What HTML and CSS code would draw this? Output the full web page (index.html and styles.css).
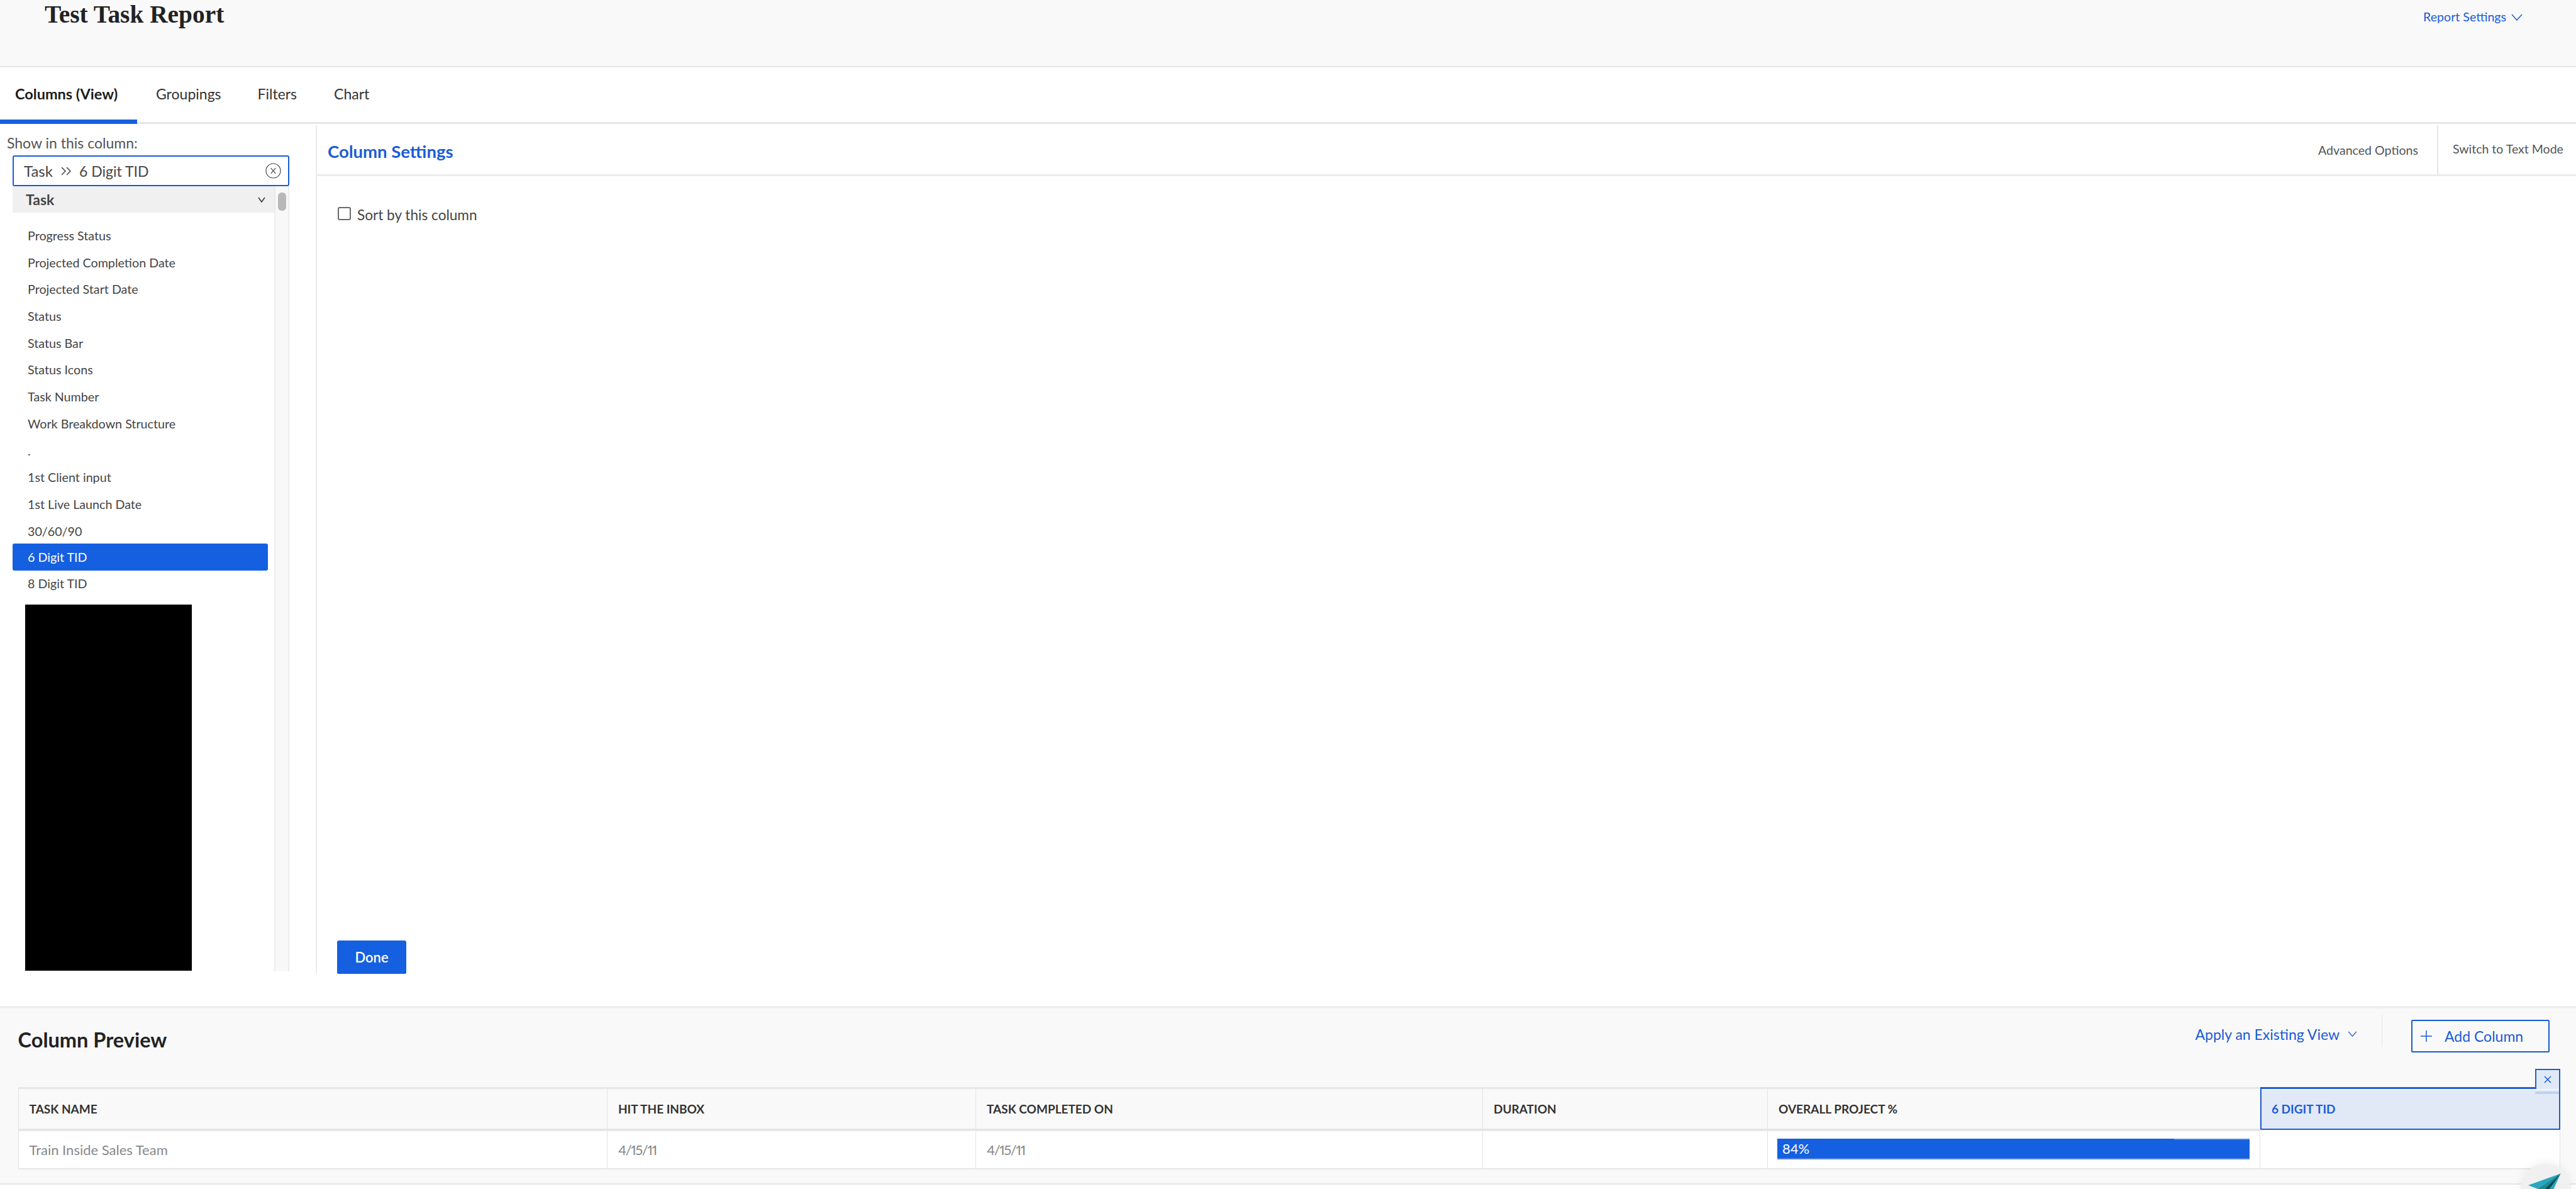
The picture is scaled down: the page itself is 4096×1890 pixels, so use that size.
FILE: index.html
```html
<!DOCTYPE html>
<html lang="en">
<head>
<meta charset="utf-8">
<title>Test Task Report</title>
<link rel="stylesheet" href="styles.css">
</head>
<body>
<div class="page">
  <header class="top">
    <h1 class="title">Test Task Report</h1>
    <a class="report-settings">Report Settings
      <svg class="chev-lg" viewBox="0 0 18 11"><path d="M1 1l8 9 8-9"/></svg>
    </a>
  </header>
  <nav class="tabs">
    <a class="tab active">Columns (View)</a>
    <a class="tab t2">Groupings</a>
    <a class="tab t3">Filters</a>
    <a class="tab t4">Chart</a>
  </nav>
  <main class="editor">
    <aside class="picker">
      <div class="show-label">Show in this column:</div>
      <div class="field">
        <span class="crumb">Task</span>
        <svg class="sep" viewBox="0 0 17 14"><path d="M1 1l6 6-6 6M9 1l6 6-6 6"/></svg>
        <span>6 Digit TID</span>
        <svg class="clear" viewBox="0 0 26 26"><circle cx="13" cy="13" r="12"/><path d="M9 8.5l8 9M17 8.5l-8 9"/></svg>
      </div>
      <div class="listwrap">
        <div class="list">
          <div class="group">Task
            <svg class="chev-sm" viewBox="0 0 12 9"><path d="M1 1l5 7 5-7"/></svg>
          </div>
          <div class="rows">
            <div class="row">Progress Status</div>
            <div class="row">Projected Completion Date</div>
            <div class="row">Projected Start Date</div>
            <div class="row">Status</div>
            <div class="row">Status Bar</div>
            <div class="row">Status Icons</div>
            <div class="row">Task Number</div>
            <div class="row">Work Breakdown Structure</div>
            <div class="row">.</div>
            <div class="row">1st Client input</div>
            <div class="row">1st Live Launch Date</div>
            <div class="row">30/60/90</div>
            <div class="row selected">6 Digit TID</div>
            <div class="row">8 Digit TID</div>
          </div>
          <div class="redact"></div>
        </div>
        <div class="track"><div class="thumb"></div></div>
      </div>
    </aside>
    <section class="settings">
      <div class="settings-head">
        <h2 class="settings-title">Column Settings</h2>
        <a class="adv">Advanced Options</a>
        <a class="mode">Switch to Text Mode</a>
      </div>
      <div class="settings-body">
        <label class="sort"><span class="box"></span>Sort by this column</label>
        <button class="done">Done</button>
      </div>
    </section>
  </main>
  <section class="preview">
    <div class="preview-head">
      <h2 class="preview-title">Column Preview</h2>
      <a class="apply">Apply an Existing View
        <svg class="chev-xs" viewBox="0 0 16 10"><path d="M1 1l7 8 7-8"/></svg>
      </a>
      <span class="vrule"></span>
      <button class="add"><svg class="plus" viewBox="0 0 18 18"><path d="M9 0v18M0 9h18"/></svg>Add Column</button>
    </div>
    <div class="table">
      <div class="cell head">TASK NAME</div>
      <div class="cell head">HIT THE INBOX</div>
      <div class="cell head">TASK COMPLETED ON</div>
      <div class="cell head">DURATION</div>
      <div class="cell head">OVERALL PROJECT %</div>
      <div class="cell head current">6 DIGIT TID<span class="remove"><svg class="remove-x" viewBox="0 0 12 12"><path d="M1 1l10 10M11 1L1 11"/></svg></span></div>
      <div class="cell body">Train Inside Sales Team</div>
      <div class="cell body date">4/15/11</div>
      <div class="cell body date">4/15/11</div>
      <div class="cell body"></div>
      <div class="cell body"><div class="bar">84%</div></div>
      <div class="cell body"></div>
    </div>
  </section>
</div>
<div class="bubble">
  <svg class="plane" viewBox="0 0 80 80"><path class="p1" d="M63.5 15.6L12 34l15.6 6h24.9z"/><path class="p2" d="M63.5 15.6L27.6 40h10.9z"/><path class="p3" d="M63.5 15.6L38.5 40h7.2z"/></svg>
</div>
</body>
</html>
```
FILE: styles.css
```css
* { box-sizing: border-box; }
html, body { margin: 0; padding: 0; background: #fff; }
body { font-family: Lato, "Open Sans", sans-serif; color: #454545; width: 4096px; height: 1890px; overflow: hidden; position: relative; }
.page { display: flex; flex-direction: column; height: 1890px; }
a { display: block; }
h1, h2 { margin: 0; }

.top { height: 107px; flex: none; background: #f9f9f9; border-bottom: 2px solid #e6e6e6; padding: 0 85px 0 71px; display: flex; justify-content: space-between; align-items: flex-start; }
.title { font: bold 39.4px/1 "Liberation Serif", serif; color: #222; margin-top: 4px; }
.report-settings { color: #1a5cd6; font-size: 19.6px; margin-top: 15px; display: flex; align-items: center; gap: 8px; line-height: 24px; }
.chev-lg { width: 18px; height: 11px; }
svg path { fill: none; stroke: currentColor; stroke-width: 1.5; }

.tabs { height: 90px; flex: none; border-bottom: 3px solid #e6e6e6; display: flex; position: relative; }
.tab { font-size: 23px; color: #333; line-height: 85px; }
.tab.active { font-size: 23.5px; font-weight: 700; color: #1c1c1c; height: 90px; border-bottom: 7px solid #1560e0; width: 218px; padding: 0 0 0 24px; white-space: nowrap; }
.t2 { padding-left: 30px; }
.t3 { padding-left: 58px; }
.t4 { padding-left: 59px; }

.editor { height: 1402px; flex: none; display: flex; align-items: flex-start; }
.picker { width: 502px; flex: none; height: 1347px; padding-left: 20px; display: flex; flex-direction: column; }
.show-label { margin-left: -9px; height: 50px; padding-top: 17px; font-size: 23px; line-height: 26px; color: #555; }
.field { width: 440px; height: 49px; flex: none; border: 2px solid #1a5cd6; border-radius: 3px; display: flex; align-items: center; padding-left: 16px; font-size: 23px; color: #454545; position: relative; }
.crumb { font-size: 24px; }
.sep { width: 17px; height: 14px; margin: 0 12px 0 13px; }
.clear { position: absolute; right: 11px; top: 10px; width: 25px; height: 25px; }
.clear circle { fill: none; stroke: #444; stroke-width: 1.2; }
.clear path { stroke: #444; stroke-width: 1.2; }
.listwrap { display: flex; flex: 1; min-height: 0; width: 440px; }
.list { width: 416px; flex: none; display: flex; flex-direction: column; }
.group { height: 42px; flex: none; background: #f0f0f0; display: flex; align-items: center; justify-content: space-between; padding: 0 14px 0 21px; font-size: 23px; font-weight: 700; color: #454545; }
.chev-sm { width: 12px; height: 9px; color: #333; }
.rows { padding-top: 14px; flex: none; }
.row { height: 42.7px; padding-left: 24px; font-size: 19.7px; line-height: 45px; color: #454545; }
.row.selected { width: 405.5px; line-height: 44px; background: #1560e0; color: #fff; border-radius: 3px; }
.row.selected + .row { line-height: 42px; }
.redact { width: 265px; height: 582px; flex: none; background: #000; margin: 11px 0 0 20px; }
.track { width: 24px; flex: none; background: #f8f8f8; border-left: 2px solid #ececec; border-right: 2px solid #ececec; padding: 10px 0 0 4px; }
.thumb { width: 13px; height: 29px; border-radius: 6px; background: #b8b8b8; }

.settings { flex: 1; height: 1349px; border-left: 2px solid #ececec; margin-top: 2px; display: flex; flex-direction: column; }
.settings-head { height: 81px; flex: none; border-bottom: 3px solid #ececec; display: flex; align-items: flex-start; padding-left: 17px; }
.settings-title { font-size: 27.5px; font-weight: 700; color: #1a5cd6; margin-right: auto; line-height: 30px; padding-top: 27px; }
.adv { font-size: 19.6px; color: #555; line-height: 24px; padding-top: 28px; width: 191px; height: 78px; border-right: 2px solid #e6e6e6; }
.mode { font-size: 19.5px; color: #555; line-height: 24px; padding: 26px 0 0 23px; width: 219px; white-space: nowrap; }
.settings-body { flex: 1; position: relative; padding: 48px 0 0 33px; }
.sort { display: flex; align-items: center; font-size: 22.6px; color: #444; }
.box { width: 21px; height: 21px; border: 2px solid #6a6a6a; border-radius: 3px; margin-right: 10px; margin-top: -4px; background: #fff; }
.done { position: absolute; left: 32px; bottom: 0; width: 110px; height: 53px; background: #1560e0; color: #fff; border: 0; border-radius: 3px 3px 2px 2px; font: 600 22px Lato, sans-serif; padding: 0; }

.preview { flex: 1; background: #f9f9f9; border-top: 4px solid #efefef; border-bottom: 2px solid #e6e6e6; margin-bottom: 7px; padding: 0 26px 0 28.6px; display: flex; flex-direction: column; }
.preview-head { height: 125px; flex: none; display: flex; align-items: flex-start; position: relative; }
.preview-title { font-size: 32.5px; font-weight: 700; color: #222; margin-right: auto; padding-top: 32px; line-height: 36px; }
.apply { color: #1a5cd6; font-size: 23px; line-height: 28px; padding-top: 27px; display: flex; gap: 13px; align-items: flex-start; }
.chev-xs { width: 15px; height: 9px; margin-top: 9px; }
.vrule { width: 1px; height: 51px; background: #e6e6e6; margin: 10px 46px 0 39px; }
.add { width: 220px; height: 52px; margin: 18px 16px 0 0; background: transparent; border: 2px solid #1a5cd6; border-radius: 2px; color: #1a5cd6; font: 23px Lato, sans-serif; display: flex; align-items: center; padding: 0 0 0 13px; }
.plus { width: 18px; height: 18px; margin-right: 20px; }

.table { display: grid; grid-template-columns: 936.4px 586px 806px 453px 783px 477px; grid-template-rows: 70px 61px; border-left: 1px solid #e4e4e4; width: 4041.4px; }
.cell { display: flex; align-items: center; padding-left: 17px; border-right: 1px solid #e4e4e4; }
.head { border-top: 3px solid #e6e6e6; border-bottom: 4px solid #e6e6e6; font-size: 19px; font-weight: 700; color: #333; }
.body { background: #fff; border-bottom: 2px solid #e6e6e6; font-size: 22px; color: #888; }
.date { font-variant-numeric: proportional-nums; letter-spacing: -1.5px; }
.current { position: relative; background: #e1e9f7; border: 2px solid #1f5fcc; border-top-width: 3px; box-shadow: inset 0 2px 0 #f0f5fc; color: #1a5cd6; padding-left: 16px; height: 68px; }
.remove { position: absolute; right: -2px; top: -32px; width: 40px; height: 32px; background: #e1e9f7; border: 2px solid #1f5fcc; border-bottom: 0; display: flex; align-items: center; justify-content: center; }
.remove::after { content: ""; position: absolute; left: -2px; right: 0; top: 34px; height: 4px; background: #c3d0ee; }
.remove-x { width: 12px; height: 12px; }
.bar { position: relative; width: 751px; height: 33px; margin-left: -2px; padding-left: 8px; background: #1560e0; color: #fff; font-size: 22px; line-height: 32px; border-bottom: 2px solid #5a87de; margin-top: -3px; }
.bar::after { content: ""; position: absolute; right: 0; top: 0; width: 16%; height: 2px; background: #5a87de; }

.bubble { position: absolute; left: 4007.5px; top: 1850px; width: 80px; height: 80px; border-radius: 50%; background: #f0f0f0; box-shadow: 0 -2px 14px rgba(0,0,0,.07); overflow: hidden; }
.plane { display: block; width: 80px; height: 80px; }
.plane path { stroke: none; }
.p1 { fill: #2aa6c0; }
.p2 { fill: #1d8a8f; }
.p3 { fill: #0e4a50; }
```
